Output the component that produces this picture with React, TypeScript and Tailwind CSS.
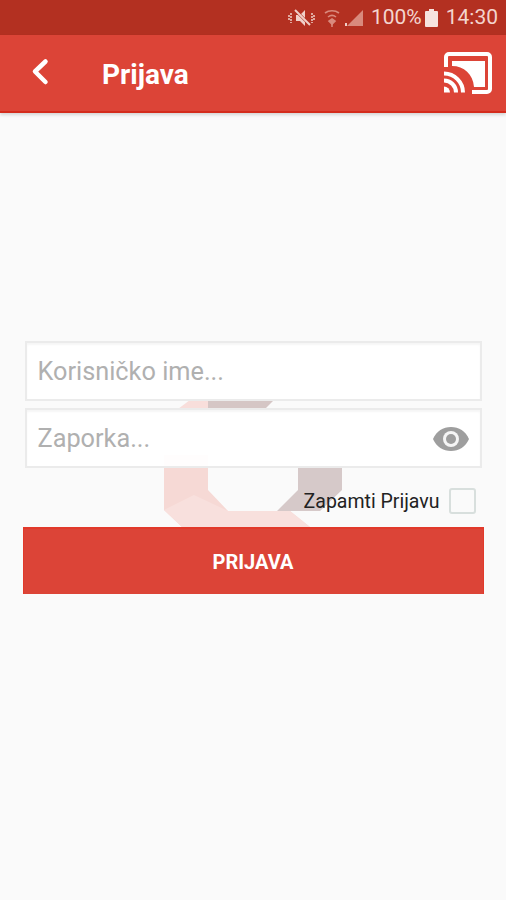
export default function App() {
  return (
    <div className="relative flex h-[900px] w-[506px] flex-col overflow-hidden bg-[#fafafa] font-['Roboto',sans-serif]">
      {/* status bar */}
      <div className="flex h-[35px] items-center justify-end bg-[#b33021] pr-[8px] text-[21px] text-[#f3d5cf]">
        <svg width="28" height="20" viewBox="0 0 28 20" className="mr-[6px]" fill="#f0cfc8">
          <path d="M8 7h4l5-5v16l-5-5H8z" />
          <path d="M7 2l15 15" stroke="#b33021" strokeWidth="3" />
          <path d="M7 2l15 15" stroke="#f0cfc8" strokeWidth="2" />
          <path d="M3 5v10M1 7v6M24 5v10M26 7v6" stroke="#f0cfc8" strokeWidth="1.500" strokeDasharray="2 1" fill="none" />
        </svg>
        <svg width="20" height="20" viewBox="0 0 20 20" className="mr-[3px]" fill="none" stroke="#d98a7d" strokeWidth="1.600">
          <path d="M3 5c4-3 10-3 14 0M6 9c2.500-2 5.500-2 8 0" />
          <path d="M10 11l3 2-3 3-3-3z" fill="#d98a7d" />
          <path d="M10 16v3" />
        </svg>
        <svg width="18" height="18" viewBox="0 0 18 18" className="mr-[8px]">
          <path d="M18 1v16H2z" fill="#d98a7d" />
          <path d="M0 14h2v3H0z" fill="#f0cfc8" />
        </svg>
        <span className="mr-[3px] leading-none">100%</span>
        <svg width="13" height="18" viewBox="0 0 13 18" className="mr-[8px]" fill="#f6e3de">
          <path d="M4 0h5v2h3a1 1 0 0 1 1 1v14a1 1 0 0 1-1 1H1a1 1 0 0 1-1-1V3a1 1 0 0 1 1-1h3z" />
        </svg>
        <span className="leading-none">14:30</span>
      </div>

      {/* app bar */}
      <header className="z-10 flex h-[78px] items-center border-b-2 border-[#d42c1c] bg-[#dc4437] pl-[31px] pr-[14px] shadow-[0_2px_3px_rgba(0,0,0,0.15)]">
        <svg width="18" height="28" viewBox="0 0 18 28" fill="none" stroke="#ffffff" strokeWidth="4.500" strokeLinecap="round" strokeLinejoin="round" className="mb-[3px]">
          <path d="M14.500 3.500L4 13.500l10.500 10.500" />
        </svg>
        <h1 className="ml-[53px] pt-[4px] text-[28px] font-bold leading-none text-white">Prijava</h1>
        <svg width="49" height="42" viewBox="0 0 49 42" className="ml-auto">
          <path d="M3 15V5a3 3 0 0 1 3-3h38a3 3 0 0 1 3 3v32a3 3 0 0 1-3 3H29" fill="none" stroke="#fff" strokeWidth="4" />
          <path d="M9 9h33v26H31C30 22 21 14 9 14z" fill="#fff" />
          <path d="M1 40.500h6a6 6 0 0 0-6-6z" fill="#fff" />
          <path d="M1 28.500a12 12 0 0 1 12 12M1 21.500a19 19 0 0 1 19 19" fill="none" stroke="#fff" strokeWidth="4" />
        </svg>
      </header>

      {/* faint logo behind the form */}
      <svg width="200" height="140" viewBox="0 0 200 140" className="absolute left-[154px] top-[395px]">
        <path d="M36 5h54v9H24z" fill="#f8dedb" />
        <path d="M54 5h66l-9 9H54z" fill="#d5c6c5" />
        <path d="M10 60h44v35l20 21h62l20 16H28L10 115z" fill="#f6d9d5" />
        <path d="M28 132l-18-17 30-15 34 16h62l20 16z" fill="#f8e0dd" />
        <path d="M144 73h44v22l-22 21h-43l21-21z" fill="#d6c9c9" />
      </svg>

      {/* form */}
      <main className="relative flex flex-col items-center pt-[228px]">
        <div className="flex h-[60px] w-[457px] items-center border-2 border-[#ebebeb] bg-white/95 pl-[11px] pt-[1px] text-[25.300px] text-[#b0b0b0] shadow-[inset_0_2px_2px_rgba(0,0,0,0.04)]">
          Korisničko ime...
        </div>
        <div className="mt-[7px] flex h-[60px] w-[457px] items-center justify-between border-2 border-[#ebebeb] bg-white/95 pl-[11px] pr-[11px] text-[25.300px] text-[#b0b0b0] shadow-[inset_0_2px_2px_rgba(0,0,0,0.04)]">
          <span className="pt-[2px]">Zaporka...</span>
          <svg width="36" height="26" viewBox="0 0 36 26" className="mt-[1px]">
            <path d="M0 13C3.500 5 10 1 18 1s14.500 4 18 12c-3.500 8-10 12-18 12S3.500 21 0 13z" fill="#9e9e9e" />
            <circle cx="18" cy="13" r="8" fill="#f5f5f5" />
            <circle cx="18" cy="13" r="5" fill="#9e9e9e" />
          </svg>
        </div>
        <div className="mt-[20px] flex h-[26px] w-[457px] items-center justify-end pr-[6px]">
          <span className="pt-[2px] text-[19.500px] leading-none text-[#222222]">Zapamti Prijavu</span>
          <span className="ml-[9px] h-[26px] w-[27px] rounded-[3px] border-2 border-[#d8dfdd] bg-[#fafafa]" />
        </div>
        <button className="mt-[13px] flex h-[67px] w-[461px] items-center justify-center border-x border-t-2 border-[#e2392a] bg-[#dc4437] text-[20px] font-bold text-white">
          PRIJAVA
        </button>
      </main>
    </div>
  );
}
